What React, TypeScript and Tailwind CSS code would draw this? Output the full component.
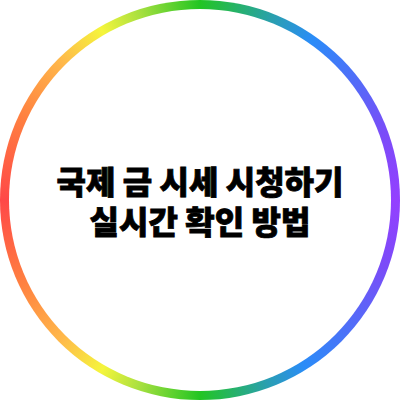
export default function App() {
  return (
    <div className="w-[400px] h-[400px] bg-white">
      <div className="w-[400px] h-[400px] rounded-full p-[9px] bg-[conic-gradient(#22c522_0deg,#2a9fb0_22deg,#2a8cf8_35deg,#7a4cf8_70deg,#9440ff_90deg,#7a4cf8_110deg,#2a8cf8_148deg,#2a9fb0_160deg,#22c522_180deg,#a8e040_198deg,#f5f53c_210deg,#ffb84a_225deg,#ff8040_245deg,#ff4848_270deg,#ff8040_295deg,#ffb84a_315deg,#f5f53c_330deg,#a8e040_342deg,#22c522_360deg)]">
        <div className="w-full h-full rounded-full bg-white flex items-center justify-center">
          <h1 className="text-center text-black text-[32px] leading-[40px] font-black [-webkit-text-stroke:0.8px_black] font-['Noto_Sans_CJK_KR',sans-serif]">
            국제 금 시세 시청하기
            <br />
            실시간 확인 방법
          </h1>
        </div>
      </div>
    </div>
  );
}
